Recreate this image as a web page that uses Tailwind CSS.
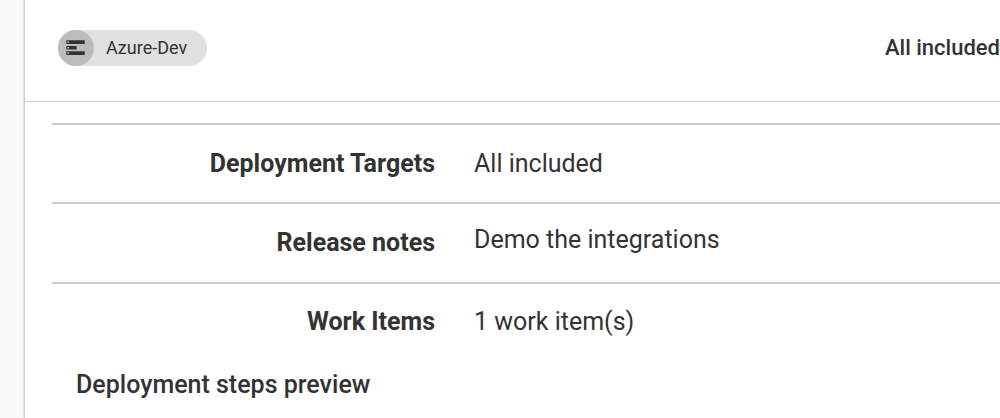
<!DOCTYPE html>
<html lang="en">
<head>
<meta charset="utf-8">
<title>Deployment preview</title>
<script src="https://cdn.jsdelivr.net/npm/@tailwindcss/browser@4"></script>
</head>
<body class="bg-[#fafafa] font-[Roboto,sans-serif] text-[#333333]">
<main class="ml-6 min-h-screen border-l border-[#cccccc] bg-white shadow-[0_0_3px_rgba(0,0,0,0.2)]">
  <header class="flex items-center justify-between border-b border-[#cccccc] pt-[30px] pb-[35px] pl-[33px]">
    <div class="flex h-9 items-center rounded-full bg-[#e0e0e0] pr-5">
      <span class="flex size-9 items-center justify-center rounded-full bg-[#bcbcbc]">
        <svg class="h-4 w-5" viewBox="0 0 20 16" aria-hidden="true">
          <path fill="#333333" d="M0.3 0.2h18.4v3.7H0.3zM0.3 5.9h10.3v3.6H0.3zM0.3 11.2h18.4v3.7H0.3z"/>
          <path fill="#cccccc" d="M1.5 1.2h1.4v1.6H1.5zM1.5 6.9h1.4v1.6H1.5zM1.5 12.2h1.4v1.6H1.5z"/>
        </svg>
      </span>
      <span class="ml-3 text-lg leading-9">Azure-Dev</span>
    </div>
    <p class="text-[22px] leading-9 font-medium">All included</p>
  </header>
  <section class="pt-[21px] pl-[27px]">
    <table class="w-full border-collapse text-[25px] leading-8">
      <tbody>
        <tr class="h-[79px] border-t-2 border-[#cccccc]">
          <th scope="row" class="w-[383px] p-0 text-right font-bold">Deployment Targets</th>
          <td class="p-0 pl-[39px]">All included</td>
        </tr>
        <tr class="h-20 border-t-2 border-[#cccccc]">
          <th scope="row" class="p-0 text-right font-bold">Release notes</th>
          <td class="p-0 pb-[6px] pl-[39px]">Demo the integrations</td>
        </tr>
        <tr class="h-[76px] border-t-2 border-[#cccccc]">
          <th scope="row" class="p-0 text-right font-bold">Work Items</th>
          <td class="p-0 pl-[39px]">1 work item(s)</td>
        </tr>
      </tbody>
    </table>
    <h2 class="pt-[10px] pl-6 text-[25px] leading-8 font-medium">Deployment steps preview</h2>
  </section>
</main>
</body>
</html>
